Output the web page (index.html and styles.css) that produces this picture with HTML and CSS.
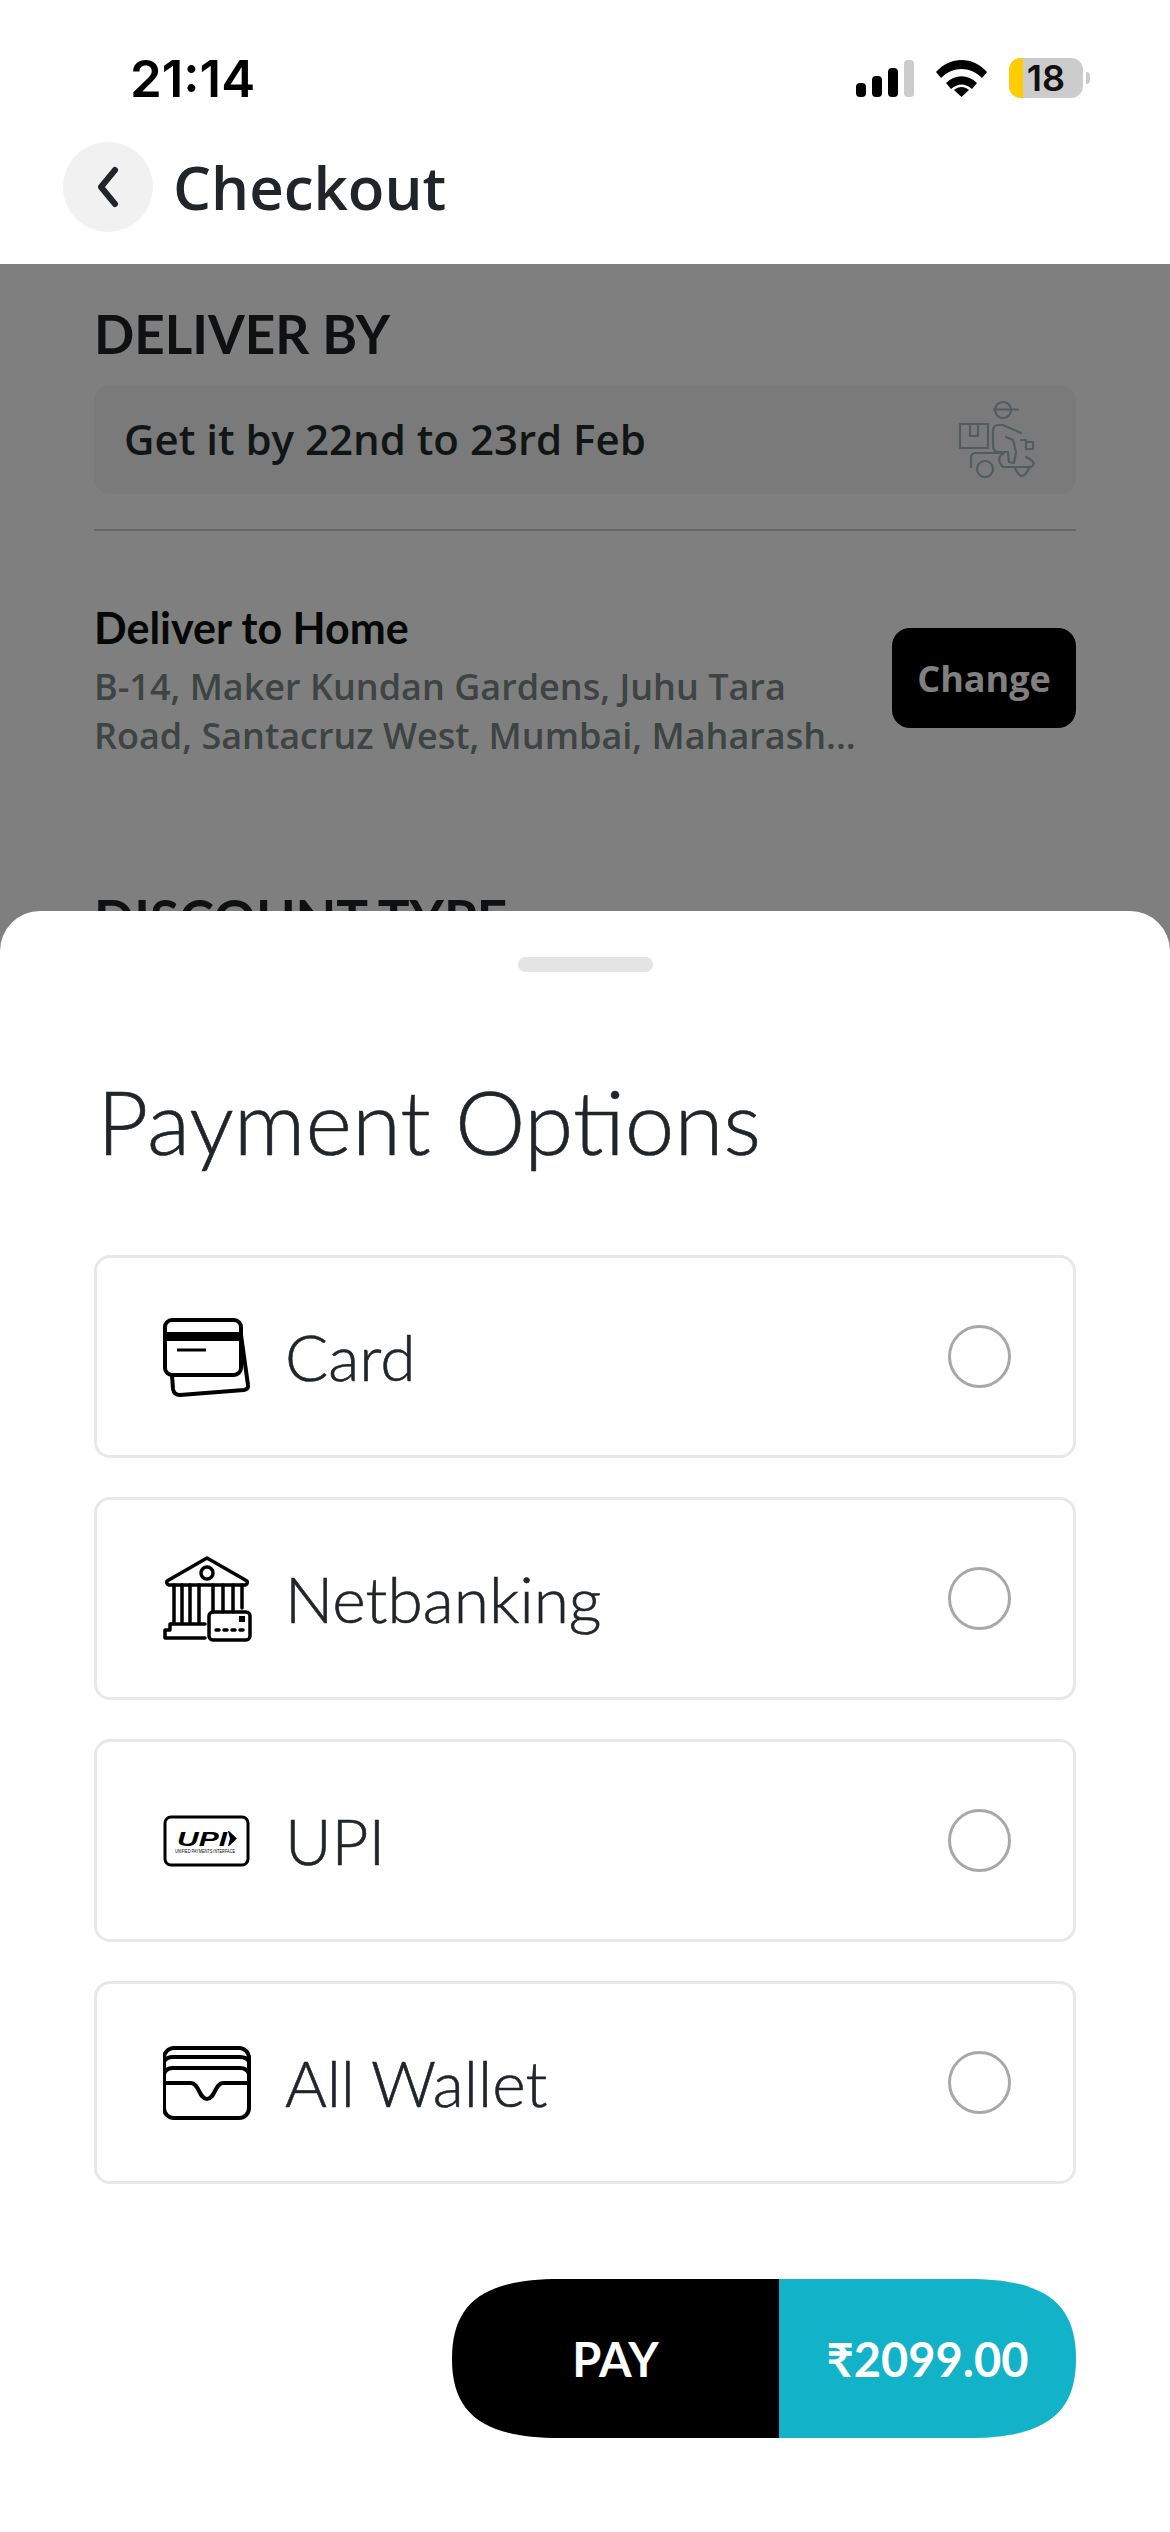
FILE: index.html
```html
<!DOCTYPE html>
<html lang="en">
<head>
  <meta charset="UTF-8">
  <title>Checkout</title>
  <link rel="stylesheet" href="styles.css">
</head>
<body>

  <div class="top">
    <div class="status">
      <span class="time">21:14</span>
      <div class="status-icons">
        <div class="signal">
          <span class="bar b1"></span>
          <span class="bar b2"></span>
          <span class="bar b3"></span>
          <span class="bar b4"></span>
        </div>
        <svg class="wifi" width="51" height="38" viewBox="0 0 51 38">
          <path d="M0 13 C14 -3 37 -3 51 13 L46 19 C34 7 17 7 5 19 Z" fill="#000"/>
          <path d="M10 24 C19 15 32 15 41 24 L36 30 C29 24 22 24 15 30 Z" fill="#000"/>
          <path d="M18 31 C23 27 28 27 33 31 L25.500 38 Z" fill="#000"/>
        </svg>
        <div class="battery">
          <div class="battery-body">
            <span class="battery-level"></span>
            <span class="battery-num">18</span>
          </div>
          <span class="battery-tip"></span>
        </div>
      </div>
    </div>
    <div class="header">
      <button class="back">
        <svg width="26" height="42" viewBox="0 0 26 42">
          <path d="M20 4 L6 21 L20 38" fill="none" stroke="#212529" stroke-width="6" stroke-linecap="round" stroke-linejoin="round"/>
        </svg>
      </button>
      <h1>Checkout</h1>
    </div>
  </div>

  <div class="behind">
    <h2>DELIVER BY</h2>
    <div class="deliver-box">
      <span class="deliver-date">Get it by 22nd to 23rd Feb</span>
      <svg class="rider" width="84" height="80" viewBox="16 8 84 80" fill="none" stroke="#525c5e" stroke-width="2.200" stroke-linecap="round" stroke-linejoin="round">
        <circle cx="62" cy="20" r="8"/>
        <path d="M53 19.500 H77"/>
        <rect x="19" y="34" width="28" height="24"/>
        <path d="M29 34 V46 H37 V34"/>
        <path d="M80 43 L62 35 H57 Q52 35 52 42 V55 Q52 62 57 62 H67 L68 72 L73 73 L75 62 L72 50 L65 47"/>
        <path d="M80 50 H85 V59 M85 52 H92 V59 H85"/>
        <path d="M30 77 V68 Q30 63 35 63 H63 Q54 68 62 77 H90 Q97 73 85 67"/>
        <circle cx="44" cy="79" r="8"/>
        <path d="M74 78 Q81 94 88 78"/>
      </svg>
    </div>
    <hr class="divider">
    <div class="address-row">
      <div class="address">
        <h3>Deliver to Home</h3>
        <p>B-14, Maker Kundan Gardens, Juhu Tara Road, Santacruz West, Mumbai, Maharash...</p>
      </div>
      <button class="change">Change</button>
    </div>
    <h2 class="discount">DISCOUNT TYPE</h2>
  </div>

  <div class="sheet">
    <div class="handle"></div>
    <h2 class="sheet-title">Payment Options</h2>

    <div class="options">
      <div class="option">
        <svg class="option-icon" width="90" height="80" viewBox="0 0 90 80" fill="none" stroke="#000" stroke-width="4" stroke-linejoin="round">
          <rect x="2" y="3" width="76" height="55" rx="7"/>
          <rect x="2" y="15" width="76" height="9" fill="#000" stroke="none"/>
          <path d="M14 33 H43" stroke-width="3"/>
          <path d="M78 18 L85 68 Q86 72 81 73 L17 78 Q11 78 10 72 L9 58"/>
        </svg>
        <span class="option-name">Card</span>
        <span class="radio"></span>
      </div>

      <div class="option">
        <svg class="option-icon" width="90" height="86" viewBox="0 0 90 86" fill="none" stroke="#000" stroke-width="3.500" stroke-linejoin="round" stroke-linecap="round">
          <path d="M44 2 L84 25 Q85 28 82 29 H6 Q3 28 4 25 Z"/>
          <circle cx="44" cy="17" r="6"/>
          <path d="M11 29 V66 M19 29 V66 M27 29 V66 M36 29 V66 M50 29 V56 M60 29 V56 M70 29 V56 M79 29 V52"/>
          <path d="M8 68 H42 M7 68 V74 H2 V82 H42"/>
          <rect x="46" y="56" width="41" height="28" rx="4"/>
          <rect x="76" y="60" width="6" height="6" fill="#000" stroke="none"/>
          <path d="M53 74 H81" stroke-dasharray="3 5"/>
        </svg>
        <span class="option-name">Netbanking</span>
        <span class="radio"></span>
      </div>

      <div class="option">
        <svg class="option-icon" width="90" height="56" viewBox="0 0 90 56">
          <rect x="2" y="4" width="83" height="48" rx="6" fill="none" stroke="#000" stroke-width="3"/>
          <text class="upi-text" x="14" y="33" textLength="50" lengthAdjust="spacingAndGlyphs">UPI</text>
          <path d="M66 18 L74 25.500 L66 33 L65 33 L67 25.500 L65 18 Z" fill="#000"/>
          <text class="upi-small" x="12" y="40" textLength="60" lengthAdjust="spacingAndGlyphs">UNIFIED PAYMENTS INTERFACE</text>
        </svg>
        <span class="option-name">UPI</span>
        <span class="radio"></span>
      </div>

      <div class="option">
        <svg class="option-icon" width="90" height="76" viewBox="0 0 90 76" fill="none" stroke="#000" stroke-width="4" stroke-linejoin="round">
          <rect x="1" y="3" width="85" height="70" rx="10"/>
          <path d="M1 17 Q3 12 10 12 H77 Q84 12 86 17"/>
          <path d="M1 29 Q3 23 10 23 H77 Q84 23 86 29"/>
          <path d="M1 38 H28 C36 38 36 54 44 54 C52 54 52 38 60 38 H86"/>
        </svg>
        <span class="option-name">All Wallet</span>
        <span class="radio"></span>
      </div>
    </div>

    <div class="pay-row">
      <button class="pay">
        <span class="pay-label">PAY</span>
        <span class="pay-amount">₹2099.00</span>
      </button>
    </div>
  </div>

</body>
</html>
```

FILE: styles.css
```css
* {
  box-sizing: border-box;
}
html, body {
  margin: 0;
  height: 2532px;
  overflow: hidden;
}
body {
  position: relative;
  width: 1170px;
  background: #7f7f7f;
  font-family: "Open Sans", sans-serif;
}
h1, h2, h3, p {
  margin: 0;
}
button {
  border: none;
  padding: 0;
}

/* top bar */
.top {
  background: #fff;
  height: 264px;
}
.status {
  display: flex;
  justify-content: space-between;
  align-items: center;
  height: 142px;
  padding: 14px 80px 0 130px;
}
.time {
  font-family: Inter, sans-serif;
  font-weight: 600;
  font-size: 51px;
  color: #000;
  line-height: 1;
}
.status-icons {
  display: flex;
  align-items: center;
  gap: 22px;
}
.signal {
  display: flex;
  align-items: flex-end;
  gap: 6px;
  height: 37px;
}
.bar {
  width: 10px;
  background: #000;
  border-radius: 4px;
}
.b1 { height: 14px; }
.b2 { height: 21px; }
.b3 { height: 29px; }
.b4 { height: 37px; background: #ccc; }
.battery {
  display: flex;
  align-items: center;
  gap: 3px;
}
.battery-body {
  position: relative;
  display: flex;
  justify-content: center;
  align-items: center;
  width: 74px;
  height: 40px;
  background: #ccc;
  border-radius: 12px;
}
.battery-level {
  position: absolute;
  left: 0;
  top: 0;
  bottom: 0;
  width: 14px;
  background: #ffcc00;
  border-radius: 12px 0 0 12px;
}
.battery-num {
  position: relative;
  font-family: Inter, sans-serif;
  font-weight: 600;
  font-size: 36px;
  line-height: 40px;
  color: #111;
}
.battery-tip {
  width: 4px;
  height: 12px;
  background: #ccc;
  border-radius: 0 6px 6px 0;
}
.header {
  display: flex;
  align-items: center;
  gap: 20px;
  padding-left: 63px;
}
.back {
  width: 90px;
  height: 90px;
  border-radius: 50%;
  background: #f1f1f1;
  display: flex;
  align-items: center;
  justify-content: center;
}
h1 {
  font-weight: 600;
  font-size: 60px;
  line-height: 90px;
  color: #212529;
}

/* dimmed page behind the sheet */
.behind {
  padding: 0 94px;
}
.behind h2 {
  font-family: Lato, sans-serif;
  font-weight: 700;
  font-size: 53px;
  line-height: 60px;
  color: #0e1011;
  padding-top: 40px;
}
.deliver-box {
  display: flex;
  justify-content: space-between;
  align-items: center;
  height: 109px;
  margin-top: 21px;
  padding: 0 35px 0 30px;
  background: #7a7a7a;
  border-radius: 16px;
  font-weight: 600;
  font-size: 42px;
  color: #111516;
}
.deliver-date {
  margin-bottom: 3px;
}
.rider {
  margin-bottom: 3px;
}
.divider {
  border: none;
  height: 2px;
  margin: 35px 0 0;
  background: #666;
}
.address-row {
  display: flex;
  justify-content: space-between;
  align-items: center;
  margin-top: 69px;
}
.address {
  width: 780px;
}
.address h3 {
  font-family: Lato, sans-serif;
  font-weight: 700;
  font-size: 43px;
  line-height: 56px;
  color: #060808;
}
.address p {
  margin-top: 6px;
  font-weight: 600;
  font-size: 36px;
  line-height: 49px;
  color: #3e4343;
}
.change {
  width: 184px;
  height: 100px;
  margin-bottom: 4px;
  background: #000;
  border-radius: 18px;
  font-family: "Open Sans", sans-serif;
  font-weight: 700;
  font-size: 36px;
  color: #808080;
}
.behind .discount {
  padding-top: 129px;
}

/* bottom sheet */
.sheet {
  position: absolute;
  left: 0;
  right: 0;
  bottom: 0;
  height: 1621px;
  background: #fff;
  border-radius: 40px 40px 0 0;
  padding: 46px 94px 0;
}
.handle {
  width: 135px;
  height: 15px;
  margin: 0 auto;
  background: #e4e4e4;
  border-radius: 8px;
}
.sheet-title {
  font-family: Lato, sans-serif;
  font-weight: 300;
  font-size: 89px;
  line-height: 110px;
  color: #212529;
  -webkit-text-stroke: 0.6px #212529;
  margin-top: 94px;
  padding-left: 3px;
}
.options {
  display: flex;
  flex-direction: column;
  gap: 39px;
  margin-top: 79px;
}
.option {
  display: flex;
  align-items: center;
  height: 203px;
  padding: 0 62px 0 66px;
  border: 3px solid #e8e8e8;
  border-radius: 16px;
}
.option-icon {
  flex: none;
  width: 90px;
}
.option-name {
  flex: 1;
  margin-left: 32px;
  font-family: Lato, sans-serif;
  font-weight: 300;
  font-size: 64px;
  color: #212529;
  -webkit-text-stroke: 0.6px #212529;
}
.radio {
  width: 63px;
  height: 63px;
  border: 3px solid #a8a8a8;
  border-radius: 50%;
}
.upi-text {
  font-family: "Liberation Sans", sans-serif;
  font-style: italic;
  font-weight: 700;
  font-size: 21px;
}
.upi-small {
  font-family: "Liberation Sans", sans-serif;
  font-size: 4.500px;
}

/* pay button */
.pay-row {
  display: flex;
  justify-content: flex-end;
  margin-top: 95px;
}
.pay {
  display: flex;
  width: 624px;
  height: 159px;
  clip-path: path("M108 0 C30 0 0 25 0 80 C0 134 30 159 108 159 H516 C594 159 624 134 624 80 C624 25 594 0 516 0 Z");
  font-family: Lato, sans-serif;
  font-weight: 700;
  font-size: 47px;
  color: #fff;
}
.pay-label, .pay-amount {
  display: flex;
  align-items: center;
  justify-content: center;
}
.pay-label {
  width: 327px;
  background: #000;
}
.pay-amount {
  flex: 1;
  background: #12b2c8;
}
```
